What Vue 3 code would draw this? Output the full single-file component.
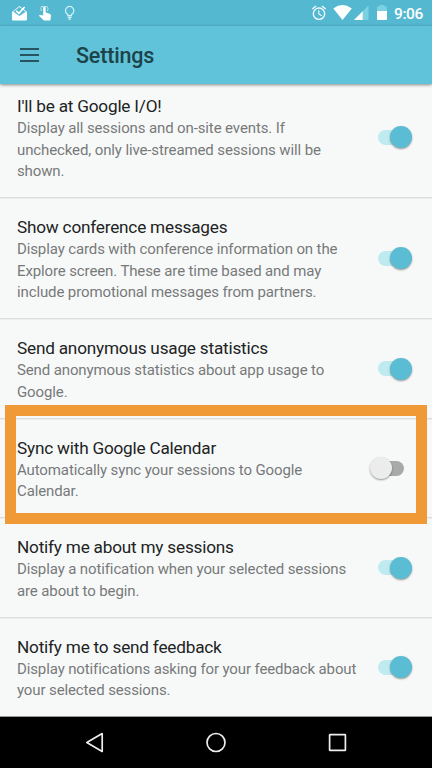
<script setup>
const settings = [
  { title: "I'll be at Google I/O!", lines: ['Display all sessions and on-site events. If', 'unchecked, only live-streamed sessions will be', 'shown.'], on: true },
  { title: 'Show conference messages', lines: ['Display cards with conference information on the', 'Explore screen. These are time based and may', 'include promotional messages from partners.'], on: true },
  { title: 'Send anonymous usage statistics', lines: ['Send anonymous statistics about app usage to', 'Google.'], on: true },
  { title: 'Sync with Google Calendar', lines: ['Automatically sync your sessions to Google', 'Calendar.'], on: false, marked: true },
  { title: 'Notify me about my sessions', lines: ['Display a notification when your selected sessions', 'are about to begin.'], on: true },
  { title: 'Notify me to send feedback', lines: ['Display notifications asking for your feedback about', 'your selected sessions.'], on: true },
]
</script>

<template>
  <div class="screen">
    <div class="status">
      <svg class="notices" width="80" height="26" viewBox="0 0 80 26">
        <path d="M12 12 L19.5 6 L27 12 V19.2 Q27 20.5 25.7 20.5 H13.3 Q12 20.5 12 19.2 Z" fill="#fff" />
        <path d="M13.4 11.8 L19.5 7 L25.6 11.8 L19.5 16 Z" fill="#55b8d1" />
        <path d="M16.2 10.8 L19 13.3 L24.6 7" fill="none" stroke="#fff" stroke-width="1.7" />
        <path d="M43.2 7.5 q0-1.2 1.2-1.2 t1.2 1.2 V12.2 L50 14 Q51.2 14.5 51 15.8 L50.3 20.5 H44 L38.8 15.8 L40 14.8 L43.2 15.6 Z" fill="#fff" />
        <path d="M41.5 11 A4 4 0 0 1 41.5 6.5 M47.3 11 A4 4 0 0 0 47.3 6.5 M41.5 6.5 H47" fill="none" stroke="#b9e3ed" stroke-width="1" />
        <path d="M67.8 15.7 V14.4 A4.2 4.2 0 1 1 71.5 14.4 V15.7 Z M67.8 17.3 H71.5 M68.3 19.1 H71" fill="none" stroke="#d4f3f8" stroke-width="1.2" />
      </svg>
      <div class="indicators">
        <svg width="80" height="26" viewBox="308 0 80 26">
          <g fill="none" stroke="#f2fcfd" stroke-width="1.4">
            <circle cx="319" cy="13.7" r="5.7" />
            <path d="M312.3 9 L316 6 M322 6 L325.7 9" />
            <path d="M318.8 10.2 V14 L321.7 15.8" stroke-width="1.1" />
          </g>
          <path d="M333.3 8.5 Q342.5 1.7 351.8 8.5 L342.5 20 Z" fill="#fff" />
          <path d="M368.5 5.5 V20 H354 Z" fill="#7bd0e1" />
          <path d="M362.7 11.3 V20 H354 Z" fill="#fff" />
          <path d="M377 11 V7.3 Q377 6.4 378 6.4 H379.3 V5 H384.5 V6.4 H386 Q387 6.4 387 7.3 V11 Z" fill="#7bd0e1" />
          <path d="M377 11 H387 V19 Q387 20 386 20 H378 Q377 20 377 19 Z" fill="#fff" />
        </svg>
        <span class="clock">9:06</span>
      </div>
    </div>
    <header class="bar">
      <div class="menu"><i></i><i></i><i></i></div>
      <h1>Settings</h1>
    </header>
    <main class="list">
      <section v-for="s in settings" :key="s.title" class="row">
        <div class="copy">
          <h2>{{ s.title }}</h2>
          <p><span v-for="l in s.lines" :key="l">{{ l }}</span></p>
        </div>
        <div class="switch" :class="{ off: !s.on }"><b></b></div>
        <div v-if="s.marked" class="marker"></div>
      </section>
    </main>
    <nav class="nav">
      <svg width="432" height="51" viewBox="0 0 432 51" fill="none" stroke="#eee" stroke-width="1.7" stroke-linejoin="round">
        <path d="M102.2 16.6 V34.4 L86.8 25.5 Z" />
        <circle cx="216" cy="25.5" r="9" />
        <rect x="329.6" y="17.6" width="15.8" height="15.8" rx=".5" />
      </svg>
    </nav>
  </div>
</template>

<style>
body { margin: 0; }
</style>

<style scoped>
.screen { width: 432px; height: 768px; display: flex; flex-direction: column; overflow: hidden; background: #f7f9f9; font-family: Roboto, sans-serif; }
.status { height: 26px; flex: none; display: flex; justify-content: space-between; background: #55b8d1; }
.status svg { display: block; }
.indicators { display: flex; width: 124px; }
.clock { color: #fff; font-size: 15.5px; line-height: 28px; margin-left: 6px; letter-spacing: -.4px; font-weight: 500; white-space: nowrap; }
.bar { height: 58px; flex: none; display: flex; align-items: center; background: #60c3d9; box-shadow: 0 1px 3px rgba(0, 0, 0, .45); position: relative; z-index: 1; }
.menu { width: 19px; margin: 0 37px 0 20px; display: flex; flex-direction: column; gap: 4px; }
.menu i { height: 2px; background: #27545e; }
h1 { margin: 0; padding-top: 2px; font-size: 21.5px; font-weight: 500; line-height: 28px; letter-spacing: -.18px; color: #1d4349; }
.list { flex: 1; min-height: 0; overflow: hidden; display: flex; flex-direction: column; }
.row { flex: none; position: relative; display: flex; align-items: center; justify-content: space-between; padding: 19.1px 20.5px 14.7px 17px; border-bottom: 1px solid #dcdede; box-shadow: 0 1px #eceeee; }
.row:first-child { margin-top: -6.7px; }
.row:last-child { border-bottom-color: #999; }
h2 { margin: 0; font-size: 17.2px; line-height: 21.9px; letter-spacing: -.21px; font-weight: 400; color: #212323; white-space: nowrap; }
p { margin: 0; font-size: 15px; line-height: 21.4px; letter-spacing: -.12px; color: #777979; }
p span { display: block; white-space: nowrap; }
.switch { width: 34px; height: 22px; margin-top: -4px; flex: none; display: flex; align-items: center; position: relative; }
.switch::before { content: ""; width: 28px; height: 15px; border-radius: 8px; background: #beeaf0; }
.switch b { position: absolute; right: 0; top: 0; width: 22px; height: 22px; border-radius: 50%; background: #5bbdd3; box-shadow: 0 1px 2px rgba(0, 0, 0, .4); }
.off { margin-right: 8px; justify-content: flex-end; }
.off::before { background: #a8aaaa; }
.off b { right: auto; left: 0; background: #ececec; }
.marker { position: absolute; left: 5px; top: -13.5px; width: 422px; height: 119px; box-sizing: border-box; border: 11px solid #f09937; z-index: 2; }
.nav { height: 51px; flex: none; background: #000; }
.nav svg { display: block; }
</style>
